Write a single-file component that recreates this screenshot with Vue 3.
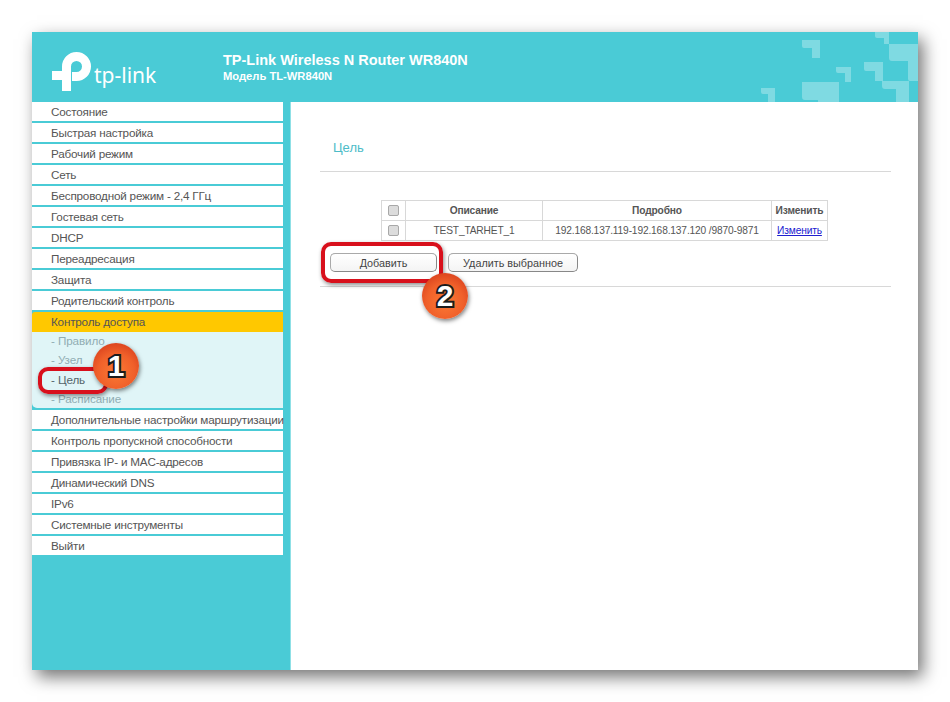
<template>
  <div class="page">
    <div class="window">
      <header class="top">
        <div class="logo">
          <svg width="44" height="44" viewBox="0 0 44 44" class="logo-mark">
            <path d="M15.500 39V14.500A10 10 0 1 1 25.500 24.500H21M1 23.500H19" fill="none" stroke="#fff" stroke-width="9" />
          </svg>
          <span class="logo-text">tp-link</span>
        </div>
        <div class="model">
          <div class="model-name">TP-Link Wireless N Router WR840N</div>
          <div class="model-sub">Модель TL-WR840N</div>
        </div>
        <!-- квадраты на фоне шапки -->
        <svg class="deco" width="160" height="70" viewBox="0 0 160 70">
          <g fill="#7fdae2">
            <path v-for="(d, i) in decoPaths" :key="i" :d="d" />
          </g>
        </svg>
      </header>

      <div class="body">
        <aside class="side">
          <nav class="menu">
            <template v-for="item in menu" :key="item">
              <div class="item" :class="{ active: item === activeItem }">{{ item }}</div>
              <div v-if="item === activeItem" class="sub">
                <div
                  v-for="s in subMenu"
                  :key="s"
                  class="sub-item"
                  :class="{ current: s === '- Цель' }"
                >{{ s }}</div>
              </div>
            </template>
          </nav>
        </aside>

        <main class="content">
          <h2 class="title">Цель</h2>
          <hr class="line" />

          <table class="grid">
            <tbody>
              <tr class="head">
                <td class="c-check"><span class="check"></span></td>
                <td class="c-desc">Описание</td>
                <td class="c-info">Подробно</td>
                <td class="c-edit">Изменить</td>
              </tr>
              <tr>
                <td class="c-check"><span class="check"></span></td>
                <td>TEST_TARHET_1</td>
                <td>192.168.137.119-192.168.137.120 /9870-9871</td>
                <td><a class="edit-link" href="#">Изменить</a></td>
              </tr>
            </tbody>
          </table>

          <div class="buttons">
            <button class="btn add">Добавить</button>
            <button class="btn del">Удалить выбранное</button>
          </div>
          <hr class="line low" />
        </main>
      </div>

      <!-- пометки поверх скриншота -->
      <div class="mark mark-one"></div>
      <div class="badge badge-one">1</div>
      <div class="mark mark-two"></div>
      <div class="badge badge-two">2</div>
    </div>
  </div>
</template>

<script setup>
const activeItem = 'Контроль доступа'

const menu = [
  'Состояние',
  'Быстрая настройка',
  'Рабочий режим',
  'Сеть',
  'Беспроводной режим - 2,4 ГГц',
  'Гостевая сеть',
  'DHCP',
  'Переадресация',
  'Защита',
  'Родительский контроль',
  'Контроль доступа',
  'Дополнительные настройки маршрутизации',
  'Контроль пропускной способности',
  'Привязка IP- и MAC-адресов',
  'Динамический DNS',
  'IPv6',
  'Системные инструменты',
  'Выйти'
]

const subMenu = ['- Правило', '- Узел', '- Цель', '- Расписание']

const decoPaths = [
  'M117 0H131V12H126V6H119Q117 6 117 4Z',
  'M44 8H62V26H54V16H46Q44 16 44 14Z',
  'M131 12H160V49H152Q150 49 150 47V29H134Q131 29 131 26Z',
  'M78 35H93V50H87V41H80Q78 41 78 39Z',
  'M106 30H125V49H117V39H108Q106 39 106 37Z',
  'M124 49H151V70H138V57H127Q124 57 124 54Z',
  'M44 50H81V70H60V68H47Q44 68 44 65Z',
  'M3 56H17V70H10V62H5Q3 62 3 60Z'
]
</script>

<style scoped>
.page {
  padding: 32px;
  width: 886px;
  height: 638px;
  font-family: "Liberation Sans", Arial, sans-serif;
}
.window {
  position: relative;
  width: 886px;
  height: 638px;
  background: #fff;
  box-shadow: 5px 7px 16px rgba(0, 0, 0, 0.55);
  display: flex;
  flex-direction: column;
}
.top {
  position: relative;
  height: 70px;
  flex: none;
  background: #4acbd6;
  display: flex;
  overflow: hidden;
}
.logo {
  width: 191px;
  display: flex;
  align-items: flex-start;
  padding-left: 19px;
  box-sizing: border-box;
}
.logo-mark {
  margin-top: 20px;
  flex: none;
}
.logo-text {
  margin: 27px 0 0 -1px;
  font-family: "Noto Sans", sans-serif;
  font-weight: 400;
  font-size: 21px;
  line-height: 32px;
  color: #fff;
  white-space: nowrap;
}
.model {
  color: #fff;
  font-weight: bold;
  padding-top: 20px;
}
.model-name {
  font-size: 14.500px;
  line-height: 16px;
}
.model-sub {
  font-size: 11.200px;
  line-height: 14px;
  margin-top: 1px;
}
.deco {
  position: absolute;
  right: 0;
  top: 0;
  width: 160px;
}
.body {
  flex: 1;
  display: flex;
  min-height: 0;
}
.side {
  width: 259px;
  flex: none;
  background: #4acbd6;
  border-right: 1px solid #8fe0e6;
  box-sizing: border-box;
}
.menu {
  width: 251px;
  display: flex;
  flex-direction: column;
}
.item {
  height: 19px;
  line-height: 20px;
  margin-bottom: 2px;
  padding-left: 19px;
  background: #fff;
  color: #555;
  font-size: 11.700px;
  letter-spacing: -0.2px;
  white-space: nowrap;
}
.item.active {
  background: #ffc800;
  color: #555;
  border-top-left-radius: 3px;
  margin-bottom: 0;
  height: 20px;
}
.sub {
  background: #e0f5f7;
  padding-bottom: 0;
  height: 76px;
  margin-bottom: 2px;
  border-bottom-left-radius: 5px;
}
.sub-item {
  height: 19.400px;
  line-height: 18.400px;
  padding-left: 19px;
  font-size: 11.700px;
  letter-spacing: -0.12px;
  color: #90adb3;
}
.sub-item.current {
  color: #55656a;
}
.content {
  flex: 1;
  min-width: 0;
  padding-left: 29px;
  box-sizing: border-box;
}
.title {
  margin: 0;
  padding: 38px 0 0 13px;
  font-size: 13px;
  line-height: 16px;
  font-weight: normal;
  color: #4dbcc8;
  height: 31px;
}
.line {
  margin: 0;
  border: 0;
  border-top: 1px solid #d8d8d8;
  width: 571px;
}
.line.low {
  margin-top: 14px;
}
.grid {
  margin: 28px 0 0 61px;
  width: 447px;
  border-collapse: collapse;
  table-layout: fixed;
  font-size: 10.200px;
  letter-spacing: -0.15px;
  color: #555;
  text-align: center;
}
.grid td {
  border: 1px solid #d8d8d8;
  height: 19px;
  padding: 0;
}
.head td {
  font-weight: bold;
  padding-bottom: 1px;
  height: 18px;
}
.c-check {
  width: 23px;
  line-height: 0;
}
.c-desc {
  width: 136px;
}
.c-info {
  width: 228px;
}
.check {
  display: inline-block;
  width: 9px;
  height: 9px;
  border: 1px solid #a8a8a8;
  border-radius: 2px;
  background: #dcdcdc;
  vertical-align: middle;
}
.edit-link {
  color: #2020d0;
}
.buttons {
  display: flex;
  gap: 11px;
  margin: 12px 0 0 10px;
}
.btn {
  height: 19px;
  padding: 0;
  font-family: inherit;
  font-size: 10.800px;
  color: #444;
  background: linear-gradient(#fff, #f4f4f4);
  border: 1px solid #a9a9a9;
  border-bottom-color: #888;
  border-right-color: #888;
  border-radius: 5px;
}
.add {
  width: 107px;
}
.del {
  width: 130px;
}
.mark {
  position: absolute;
  border: 4px solid #d8101c;
  border-radius: 10px;
  box-sizing: border-box;
  box-shadow: 1px 2px 4px rgba(0, 0, 0, 0.45);
}
.mark-one {
  left: 6px;
  top: 335px;
  width: 70px;
  height: 27px;
}
.mark-two {
  left: 289px;
  top: 210px;
  width: 122px;
  height: 41px;
}
.badge {
  position: absolute;
  width: 46px;
  height: 46px;
  border-radius: 50%;
  background: radial-gradient(circle at 50% 62%, #fb7a34 0%, #f0602a 50%, #d2381a 92%, #b32a12 100%);
  box-shadow: 1px 2px 4px rgba(0, 0, 0, 0.5);
  color: #fff;
  font-size: 30px;
  font-weight: bold;
  line-height: 46px;
  text-align: center;
  -webkit-text-stroke: 4px #1c1c1c;
  paint-order: stroke fill;
}
.badge-one {
  left: 61px;
  top: 311px;
}
.badge-two {
  left: 390px;
  top: 241px;
}
</style>
